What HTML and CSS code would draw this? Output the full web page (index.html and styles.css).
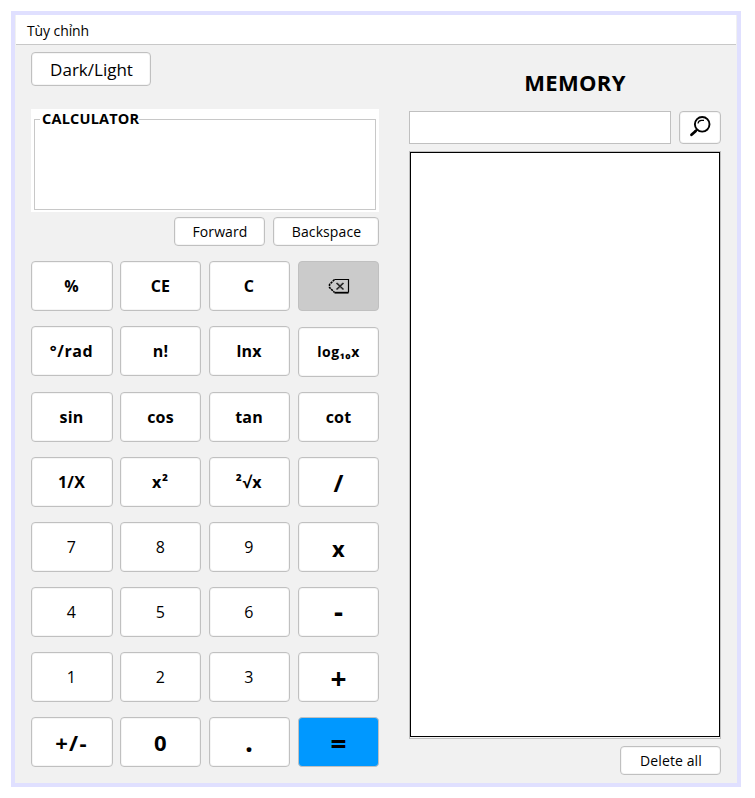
FILE: index.html
```html
<!DOCTYPE html>
<html lang="vi">
<head>
<meta charset="utf-8">
<title>Calculator</title>
<link rel="stylesheet" href="styles.css">
</head>
<body>
<div class="window">
  <div class="menubar"><span class="menu-item">Tùy chỉnh</span></div>
  <div class="content">
    <main class="left">
      <button class="btn theme"><span>Dark/Light</span></button>
      <section class="display"><div class="display-frame"><h2 class="display-title">CALCULATOR</h2></div></section>
      <div class="history">
        <button class="btn forward"><span>Forward</span></button>
        <button class="btn backspace"><span>Backspace</span></button>
      </div>
      <div class="keys">
        <button class="btn key"><span>%</span></button>
        <button class="btn key"><span>CE</span></button>
        <button class="btn key"><span>C</span></button>
        <button class="btn key erase" aria-label="Erase"><svg width="22" height="16" viewBox="0 0 22 16" fill="none" stroke="#000" stroke-width="1.2"><path d="M6.5 1.5H20.5V14.5"/><path d="M20.5 14.7H6.5" stroke-width="1.8"/><path d="M6.5 1.5L1.5 6.5V9.5L6.5 14.5" stroke-dasharray="2.4 .7" stroke-width="1.5"/><path d="M8.5 5L15.5 11.5M15.5 5L8.5 11.5" stroke="#222" stroke-width="1.6"/><path d="M10 4.8L12 6.8L14 4.8M10 11.5L12 9.5L14 11.5" stroke="#777" stroke-width=".7"/></svg></button>
        <button class="btn key"><span class="rad">°/rad</span></button>
        <button class="btn key"><span>n!</span></button>
        <button class="btn key"><span>lnx</span></button>
        <button class="btn key log"><span>log₁₀x</span></button>
        <button class="btn key"><span>sin</span></button>
        <button class="btn key"><span>cos</span></button>
        <button class="btn key"><span>tan</span></button>
        <button class="btn key"><span>cot</span></button>
        <button class="btn key"><span>1/X</span></button>
        <button class="btn key power"><span>x²</span></button>
        <button class="btn key power"><span>²√x</span></button>
        <button class="btn key op slash"><span>/</span></button>
        <button class="btn key num"><span>7</span></button>
        <button class="btn key num"><span>8</span></button>
        <button class="btn key num"><span>9</span></button>
        <button class="btn key op times"><span>x</span></button>
        <button class="btn key num"><span>4</span></button>
        <button class="btn key num"><span>5</span></button>
        <button class="btn key num"><span>6</span></button>
        <button class="btn key op minus"><span>-</span></button>
        <button class="btn key num"><span>1</span></button>
        <button class="btn key num"><span>2</span></button>
        <button class="btn key num"><span>3</span></button>
        <button class="btn key op plus"><span>+</span></button>
        <button class="btn key sign"><span>+/-</span></button>
        <button class="btn key zero"><span>0</span></button>
        <button class="btn key op dot"><span>.</span></button>
        <button class="btn key op equals"><span>=</span></button>
      </div>
    </main>
    <aside class="right">
      <h2 class="memory-title">MEMORY</h2>
      <div class="search">
        <input class="search-input" type="text" aria-label="Search">
        <button class="btn search-btn" aria-label="Search"><svg width="22" height="22" viewBox="0 0 22 22" fill="none" stroke="#000"><circle cx="13.2" cy="8.3" r="7.3" stroke-width="1.9"/><path d="M9 7.5C9.2 5.6 10.7 4.4 12.5 4.3H15" stroke-width="1.2"/><path d="M7.8 13.8L5.8 15.8" stroke-width="2"/><path d="M6.5 15.3L2.5 18.8" stroke-width="2.8" stroke-linecap="round"/></svg></button>
      </div>
      <div class="list"><div class="list-view"></div></div>
      <button class="btn delete"><span>Delete all</span></button>
    </aside>
  </div>
</div>
</body>
</html>
```

FILE: styles.css
```css
* { box-sizing: border-box; }
body { margin: 0; padding: 11px; background: #fff; color: #000; font-family: "Open Sans", "Noto Sans", sans-serif; overflow: hidden; }
.window { width: 730px; height: 776px; border: 4px solid #e0e0ff; background: #f1f1f1; }
.menubar { height: 30px; margin: 0 1px; padding-left: 11px; background: #fff; border-bottom: 1px solid #c8c8c8; font-size: 14px; line-height: 31px; letter-spacing: -0.1px; }
.content { display: flex; gap: 30px; padding: 7px 16px 0; }
.left { width: 348px; }
.right { width: 312px; display: flex; flex-direction: column; }
.btn { display: flex; align-items: center; justify-content: center; margin: 0; padding: 0; border: 1px solid #c0c0c0; border-radius: 4px; background: #fff; color: #000; font-family: inherit; white-space: nowrap; box-shadow: inset 0 0 0 1px #f5f5f5; }
.theme { width: 120px; height: 34px; padding-left: 1px; font-size: 17px; }
.display { height: 103px; margin-top: 23px; padding: 10px 3px 2px; background: #fff; }
.display-frame { height: 91px; border: 1px solid #c8c8c8; }
.display-title { display: table; margin: -11px 0 0 5px; padding: 0 0 0 2px; background: #fff; font-size: 14.5px; line-height: 20px; font-weight: 700; letter-spacing: 0.2px; }
.history { display: flex; justify-content: flex-end; gap: 8px; margin-top: 5px; }
.history .btn, .delete { height: 29px; padding-left: 1px; font-size: 14px; letter-spacing: 0.1px; }
.forward { width: 91px; }
.backspace { width: 106px; }
.keys { display: grid; grid-template-columns: repeat(4, 81px); grid-template-rows: 50px 51px repeat(6, 50px); gap: 15px 8px; margin-top: 15px; }
.key { height: 50px; font-size: 16px; font-weight: 700; letter-spacing: 0.2px; }
.key:nth-child(4n + 1) { margin-right: -1px; padding-right: 1px; }
.key:nth-child(4n + 3) { padding-right: 1px; }
.rad { letter-spacing: 0.6px; }
.key.power { letter-spacing: 0.8px; }
.key.log { margin-top: 1px; padding-bottom: 2px; font-size: 14px; letter-spacing: 0.5px; }
.key.num { font-weight: 400; }
.key.op, .key.zero { font-size: 22px; }
.key.sign { font-size: 22px; letter-spacing: 1.2px; }
.key.slash { font-size: 24px; }
.key.minus, .key.plus, .key.equals, .key.dot { font-size: 28px; }
.key.erase { background: #cbcbcb; box-shadow: none; }
.key.equals { background: #0098ff; box-shadow: none; }
.key.op span { position: relative; }
.key.times span { top: 1px; }
.key.minus span { top: -1px; }
.key.plus span, .key.equals span { top: 1px; }
.key.dot span { top: -1px; }
.memory-title { margin: 16px 0 0 20px; font-size: 22px; line-height: 28px; font-weight: 700; text-align: center; letter-spacing: 0.3px; }
.search { display: flex; justify-content: space-between; margin-top: 15px; }
.search-input { width: 262px; height: 33px; border: 1px solid #c0c0c0; background: #fff; outline: 0; }
.search-btn { width: 42px; height: 33px; padding-bottom: 2px; }
.list { height: 588px; margin-top: 7px; padding-bottom: 1px; border: 1px solid #c0c0c0; background: #f5f5f5; }
.list-view { height: 100%; border: 1px solid #000; background: #fff; }
.delete { align-self: flex-end; width: 101px; margin-top: 7px; }
```
